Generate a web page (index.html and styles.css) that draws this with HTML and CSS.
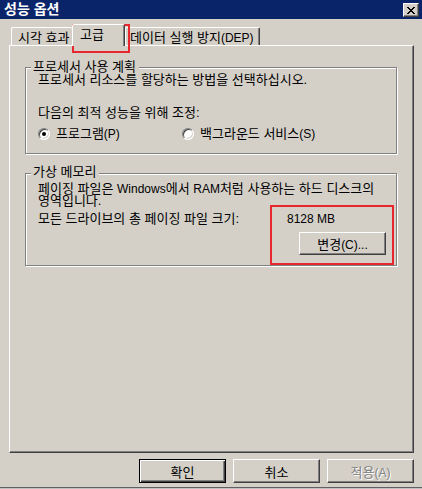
FILE: index.html
```html
<html>
<head>
    <title>성능 옵션</title>
    <link rel="stylesheet" href="styles.css">
</head>
<body>

<div class="window">
    <!-- Naslovna traka -->
    <div class="titlebar">
        <span class="title">성능 옵션</span>
        <span class="close">
            <svg width="8" height="7" viewBox="0 0 8 7" shape-rendering="crispEdges">
                <path fill="#000" d="M0 0h2v1h-2z M6 0h2v1h-2z M1 1h2v1h-2z M5 1h2v1h-2z M2 2h4v1h-4z M3 3h2v1h-2z M2 4h4v1h-4z M1 5h2v1h-2z M5 5h2v1h-2z M0 6h2v1h-2z M6 6h2v1h-2z"/>
            </svg>
        </span>
    </div>

    <!-- Kartice -->
    <div class="tabs">
        <div class="tab first">시각 효과</div>
        <div class="tab active">고급</div>
        <div class="tab last">데이터 실행 방지<span class="en">(DEP)</span></div>
    </div>

    <div class="panel">
        <div class="group cpu">
            <div class="group-title">프로세서 사용 계획</div>
            <p class="line">프로세서 리소스를 할당하는 방법을 선택하십시오.</p>
            <p class="line adjust">다음의 최적 성능을 위해 조정:</p>
            <div class="radios">
                <label class="option wide"><span class="radio checked"></span>프로그램<span class="en">(P)</span></label>
                <label class="option"><span class="radio"></span>백그라운드 서비스<span class="en">(S)</span></label>
            </div>
        </div>

        <div class="group vm">
            <div class="group-title">가상 메모리</div>
            <p class="line desc">페이징 파일은 <span class="en">Windows</span>에서 <span class="en">RAM</span>처럼 사용하는 하드 디스크의<br>영역입니다.</p>
            <div class="size-row">
                <span class="size-label">모든 드라이브의 총 페이징 파일 크기:</span>
                <span class="en">8128 MB</span>
            </div>
            <button type="button" class="btn change">변경<span class="en">(C)...</span></button>
        </div>
    </div>

    <div class="buttons">
        <button type="button" class="btn default">확인</button>
        <button type="button" class="btn">취소</button>
        <button type="button" class="btn disabled">적용<span class="en">(A)</span></button>
    </div>

    <!-- Crveni okviri (oznake) -->
    <div class="mark mark-tab"></div>
    <div class="mark mark-change"></div>
</div>

</body>
</html>
```

FILE: styles.css
```css
/* Osnovni stil stranice */
body {
    margin: 0;
    background-color: #d4d0c8;
}

/* Prozor dijaloga */
.window {
    position: relative;
    width: 422px;
    height: 489px;
    background-color: #d4d0c8;
    font-family: "Liberation Sans", "Noto Sans CJK KR", sans-serif;
    font-size: 13px;
    color: #000;
    box-shadow: inset 0 -1px 0 #c0c0c0, inset 0 -2px 0 #606060;
    overflow: hidden;
}

/* Latinicni delovi teksta su malo manji */
.en {
    font-size: 12px;
}

/* Naslovna traka */
.titlebar {
    height: 19px;
    background-color: #0a246a;
    display: flex;
    justify-content: space-between;
    align-items: flex-start;
}

.title {
    color: #fff;
    font-weight: bold;
    font-size: 14px;
    line-height: 19px;
    padding-left: 4px;
}

.close {
    width: 16px;
    height: 14px;
    box-sizing: border-box;
    margin: 3px 3px 0 0;
    background-color: #d4d0c8;
    border-top: 1px solid #fff;
    border-left: 1px solid #fff;
    border-right: 1px solid #404040;
    border-bottom: 1px solid #404040;
    box-shadow: inset -1px -1px 0 #808080;
    display: flex;
    align-items: center;
    justify-content: center;
}

/* Kartice */
.tabs {
    display: flex;
    align-items: flex-end;
    height: 21px;
    margin: 5px 0 0 11px;
}

.tab {
    box-sizing: border-box;
    height: 18px;
    padding-top: 4px;
    line-height: 12px;
    white-space: nowrap;
    border-top: 1px solid #fff;
    border-left: 1px solid #fff;
    border-right: 1px solid #404040;
    box-shadow: inset -1px 0 0 #808080;
    border-radius: 2px 2px 0 0;
}

.tab.first {
    width: 61px;
    padding-left: 6px;
    border-right: none;
    box-shadow: none;
}

.tab.active {
    position: relative;
    z-index: 1;
    width: 53px;
    height: 22px;
    margin-bottom: -1px;
    padding-left: 7px;
    background-color: #d4d0c8;
}

.tab.last {
    width: 135px;
    padding-left: 4px;
}

/* Panel kartice */
.panel {
    box-sizing: border-box;
    width: 405px;
    height: 408px;
    margin-left: 9px;
    padding-left: 15px;
    border-top: 1px solid #fff;
    border-left: 1px solid #fff;
    border-right: 1px solid #404040;
    border-bottom: 1px solid #404040;
    box-shadow: inset -1px -1px 0 #808080;
}

/* Grupe */
.group {
    width: 372px;
    box-sizing: border-box;
    border: 1px solid #808080;
    box-shadow: 1px 1px 0 #fff, inset 1px 1px 0 #fff;
    padding: 0 10px 0 12px;
    line-height: 12px;
}

.group-title {
    width: fit-content;
    padding: 0 3px 0 2px;
    margin-left: -7px;
    background-color: #d4d0c8;
    line-height: 12px;
}

.line {
    margin: 0;
    white-space: nowrap;
}

.cpu {
    margin-top: 21px;
    padding-bottom: 13px;
}

.cpu .group-title {
    margin-top: -7px;
    margin-bottom: 1px;
}

.adjust {
    margin-top: 21px;
}

.radios {
    display: flex;
    margin-top: 9px;
    height: 12px;
}

.option {
    display: flex;
    align-items: center;
    white-space: nowrap;
}

.option.wide {
    width: 144px;
}

/* Radio dugme */
.radio {
    position: relative;
    width: 12px;
    height: 12px;
    box-sizing: border-box;
    margin-right: 6px;
    border-radius: 50%;
    background-color: #fff;
    border: 1px solid;
    border-color: #808080 #fff #fff #808080;
    box-shadow: inset 1px 1px 0 #404040, inset -1px -1px 0 #d4d0c8;
}

.radio.checked::after {
    content: "";
    position: absolute;
    left: 3px;
    top: 3px;
    width: 4px;
    height: 4px;
    border-radius: 50%;
    background-color: #000;
}

.vm {
    margin-top: 19px;
    padding-bottom: 10px;
}

.vm .group-title {
    margin-top: -8px;
    margin-bottom: 1px;
}

.desc {
    margin-top: 5px;
}

.size-row {
    display: flex;
    margin-top: 6px;
    white-space: nowrap;
}

.size-label {
    width: 249px;
}

/* Dugmad */
.btn {
    box-sizing: border-box;
    width: 87px;
    height: 24px;
    padding: 0;
    font-family: "Liberation Sans", "Noto Sans CJK KR", sans-serif;
    font-size: 13px;
    color: #000;
    background-color: #d4d0c8;
    border-top: 1px solid #fff;
    border-left: 1px solid #fff;
    border-right: 1px solid #404040;
    border-bottom: 1px solid #404040;
    box-shadow: inset -1px -1px 0 #808080;
    border-radius: 0;
}

.btn.change {
    display: block;
    height: 23px;
    margin: 7px 0 0 auto;
}

.btn.default {
    border: 1px solid #000;
    box-shadow: inset 1px 1px 0 #fff, inset -1px -1px 0 #404040, inset -2px -2px 0 #808080;
}

.btn.disabled {
    color: #808080;
    text-shadow: 1px 1px 0 #fff;
}

.buttons {
    display: flex;
    justify-content: flex-end;
    gap: 7px;
    margin-top: 6px;
    padding-right: 8px;
}

/* Crvene oznake */
.mark {
    position: absolute;
    box-sizing: border-box;
    border: 2px solid #e8262d;
}

.mark-tab {
    left: 72px;
    top: 24px;
    width: 58px;
    height: 29px;
}

.mark-change {
    left: 270px;
    top: 205px;
    width: 124px;
    height: 60px;
}
```
